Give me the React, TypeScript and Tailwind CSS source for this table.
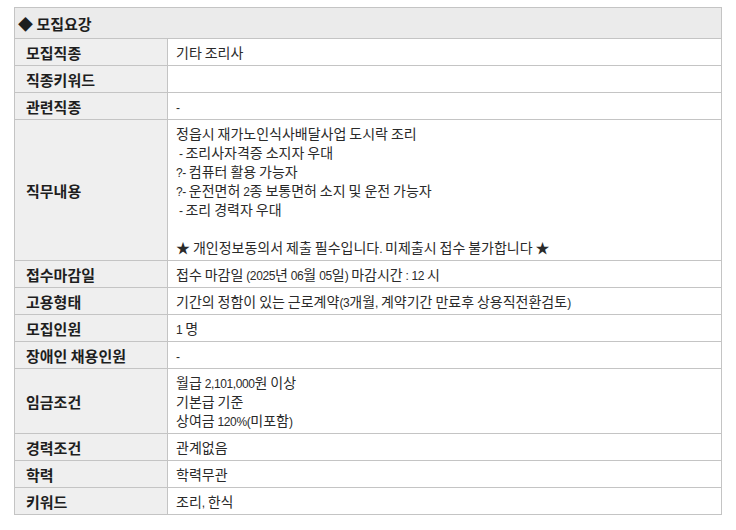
const rows: { label: string; lines: string[] }[] = [
  { label: '모집직종', lines: ['기타 조리사'] },
  { label: '직종키워드', lines: [''] },
  { label: '관련직종', lines: ['-'] },
  {
    label: '직무내용',
    lines: [
      '정읍시 재가노인식사배달사업 도시락 조리',
      ' - 조리사자격증 소지자 우대',
      '?- 컴퓨터 활용 가능자',
      '?- 운전면허 2종 보통면허 소지 및 운전 가능자',
      ' - 조리 경력자 우대',
      '',
      '★ 개인정보동의서 제출 필수입니다. 미제출시 접수 불가합니다 ★',
    ],
  },
  { label: '접수마감일', lines: ['접수 마감일 (2025년 06월 05일) 마감시간 : 12 시'] },
  { label: '고용형태', lines: ['기간의 정함이 있는 근로계약(3개월, 계약기간 만료후 상용직전환검토)'] },
  { label: '모집인원', lines: ['1 명'] },
  { label: '장애인 채용인원', lines: ['-'] },
  { label: '임금조건', lines: ['월급 2,101,000원 이상', '기본급 기준', '상여금 120%(미포함)'] },
  { label: '경력조건', lines: ['관계없음'] },
  { label: '학력', lines: ['학력무관'] },
  { label: '키워드', lines: ['조리, 한식'] },
];

// latin runs are set narrower than hangul, like the old gulim page
function Txt({ text, small }: { text: string; small: string }) {
  const parts = text.split(/([\x20-\x7E]+)/).filter(Boolean);
  return (
    <>
      {parts.map((p, i) =>
        /^[\x20-\x7E]+$/.test(p) ? (
          <span key={i} className={small}>{p}</span>
        ) : (
          <span key={i}>{p}</span>
        )
      )}
    </>
  );
}

export default function App() {
  return (
    <div className="bg-white min-h-[530px] pl-[14px] pt-[7px] font-['Noto_Sans_CJK_KR',sans-serif] text-[14px] leading-[19px] text-[#2a2a2a]">
      <table className="w-[708px] border-collapse border border-[#c4c4c4]">
        <tbody>
          <tr>
            <td colSpan={2} className="h-[31px] bg-[#ebebeb] border border-[#c4c4c4] px-[3px] font-bold text-[15px] text-[#1e1e1e]">
              ◆ 모집요강
            </td>
          </tr>
          {rows.map(r => (
            <tr key={r.label}>
              <td className="w-[153px] bg-[#efefef] border border-[#c4c4c4] pl-[11px] pt-[4px] pb-[3px] align-middle font-bold text-[15px] text-[#1e1e1e] whitespace-pre">
                {r.label}
              </td>
              <td className="border border-[#c4c4c4] pl-[8px] pt-[4px] pb-[3px] align-middle">
                {r.lines.map((l, i) => (
                  <div key={i} className="h-[19px] whitespace-pre">
                    <Txt text={l} small="font-['Liberation_Sans',sans-serif] text-[12px] tracking-[-0.4px]" />
                  </div>
                ))}
              </td>
            </tr>
          ))}
        </tbody>
      </table>
    </div>
  );
}
